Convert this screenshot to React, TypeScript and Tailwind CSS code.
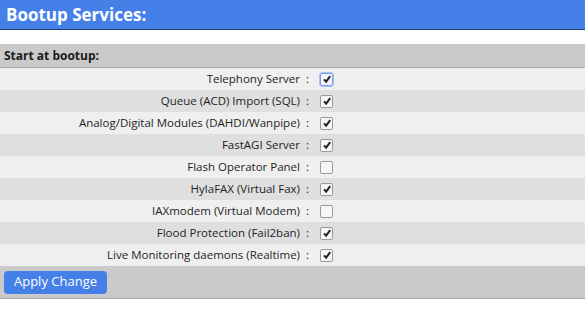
import React, { useState } from 'react';

const SERVICES: { label: string; checked: boolean }[] = [
    { label: 'Telephony Server', checked: true },
    { label: 'Queue (ACD) Import (SQL)', checked: true },
    { label: 'Analog/Digital Modules (DAHDI/Wanpipe)', checked: true },
    { label: 'FastAGI Server', checked: true },
    { label: 'Flash Operator Panel', checked: false },
    { label: 'HylaFAX (Virtual Fax)', checked: true },
    { label: 'IAXmodem (Virtual Modem)', checked: false },
    { label: 'Flood Protection (Fail2ban)', checked: true },
    { label: 'Live Monitoring daemons (Realtime)', checked: true },
];

const Check: React.FC<{ checked: boolean; focused?: boolean; onToggle: () => void }> = ({ checked, focused, onToggle }) => (
    <button
        onClick={onToggle}
        className={`w-[13px] h-[13px] rounded-[2px] border flex items-center justify-center ${
            focused ? 'border-[#7b9be8] outline outline-1 outline-[#a9c0f2] bg-[#f4f6fb]' : 'border-[#9a9a9a] bg-[#f6f6f6]'
        }`}
    >
        {checked && (
            <svg width="10" height="10" viewBox="0 0 10 10">
                <path d="M2 5.4 L4.1 7.6 L8.2 2.2" fill="none" stroke="#222" strokeWidth="2" />
            </svg>
        )}
    </button>
);

export default function App() {
    const [values, setValues] = useState(SERVICES.map(s => s.checked));

    return (
        <div className="w-[585px] h-[310px] bg-white font-['Open_Sans','Noto_Sans',sans-serif] text-[#1e1e1e]">
            <div className="h-[30px] bg-[#4580e8] border-b border-[#1f3f7a] flex items-center px-[6px]">
                <span className="text-white font-bold text-[17px] leading-none">Bootup Services:</span>
            </div>

            <div className="mt-[14px]">
                <div className="h-[24px] bg-[#cacaca] border-b border-[#a8a8a8] flex items-center px-[4px]">
                    <span className="font-bold text-[12px] text-[#1a1a1a]">Start at bootup:</span>
                </div>

                {SERVICES.map((s, i) => (
                    <div key={s.label} className={`h-[22px] flex items-center text-[11.5px] leading-none ${i % 2 === 0 ? 'bg-[#efefef]' : 'bg-[#dfdfdf]'}`}>
                        <div className="w-[300px] text-right pb-[1px]">{s.label}</div>
                        <div className="w-[20px] pl-[6px]">:</div>
                        <Check
                            checked={values[i]}
                            focused={i === 0}
                            onToggle={() => setValues(v => v.map((x, j) => (j === i ? !x : x)))}
                        />
                    </div>
                ))}

                <div className="h-[33px] bg-[#cacaca] border-b border-[#a8a8a8] flex items-center px-[4px]">
                    <button className="h-[23px] w-[103px] rounded-[4px] bg-[#4580e8] text-white text-[13px]">
                        Apply Change
                    </button>
                </div>
            </div>
        </div>
    );
}
